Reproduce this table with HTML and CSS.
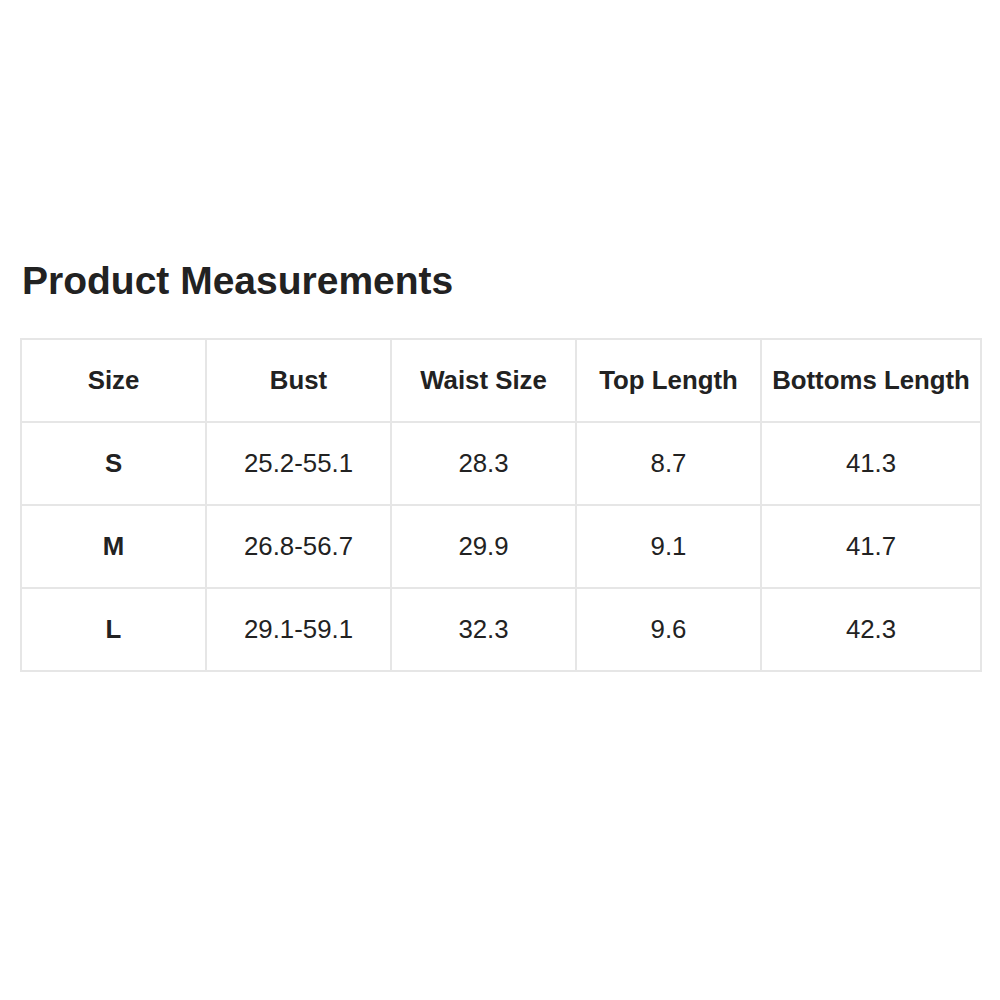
FILE: index.html
```html
<!DOCTYPE html>
<html>
<head>
<meta charset="utf-8">
<link rel="stylesheet" href="styles.css">
</head>
<body>
<main class="page">
  <h1 class="title">Product Measurements</h1>
  <table class="sizes">
    <colgroup>
      <col class="c-std"><col class="c-std"><col class="c-std"><col class="c-std"><col class="c-wide">
    </colgroup>
    <thead>
      <tr><th>Size</th><th>Bust</th><th>Waist Size</th><th>Top Length</th><th>Bottoms Length</th></tr>
    </thead>
    <tbody>
      <tr><th>S</th><td>25.2-55.1</td><td>28.3</td><td>8.7</td><td>41.3</td></tr>
      <tr><th>M</th><td>26.8-56.7</td><td>29.9</td><td>9.1</td><td>41.7</td></tr>
      <tr><th>L</th><td>29.1-59.1</td><td>32.3</td><td>9.6</td><td>42.3</td></tr>
    </tbody>
  </table>
</main>
</body>
</html>
```
FILE: styles.css
```css
html, body {
  margin: 0;
  padding: 0;
  background: #ffffff;
}
.page {
  padding: 258px 0 0 20px;
  font-family: "Liberation Sans", Arial, sans-serif;
  color: #222222;
}
.title {
  margin: 0 0 35px 2px;
  font-size: 39px;
  line-height: 45px;
  font-weight: 700;
  color: #222222;
}
.sizes {
  border-collapse: collapse;
  table-layout: fixed;
  width: 960px;
}
.c-std { width: 185px; }
.c-wide { width: 220px; }
.sizes th, .sizes td {
  border: 2px solid #e6e6e6;
  height: 81px;
  padding: 0;
  text-align: center;
  vertical-align: middle;
  font-size: 25.8px;
  color: #222222;
  white-space: nowrap;
}
.sizes th { font-weight: 700; }
.sizes td { font-weight: 400; }
```
